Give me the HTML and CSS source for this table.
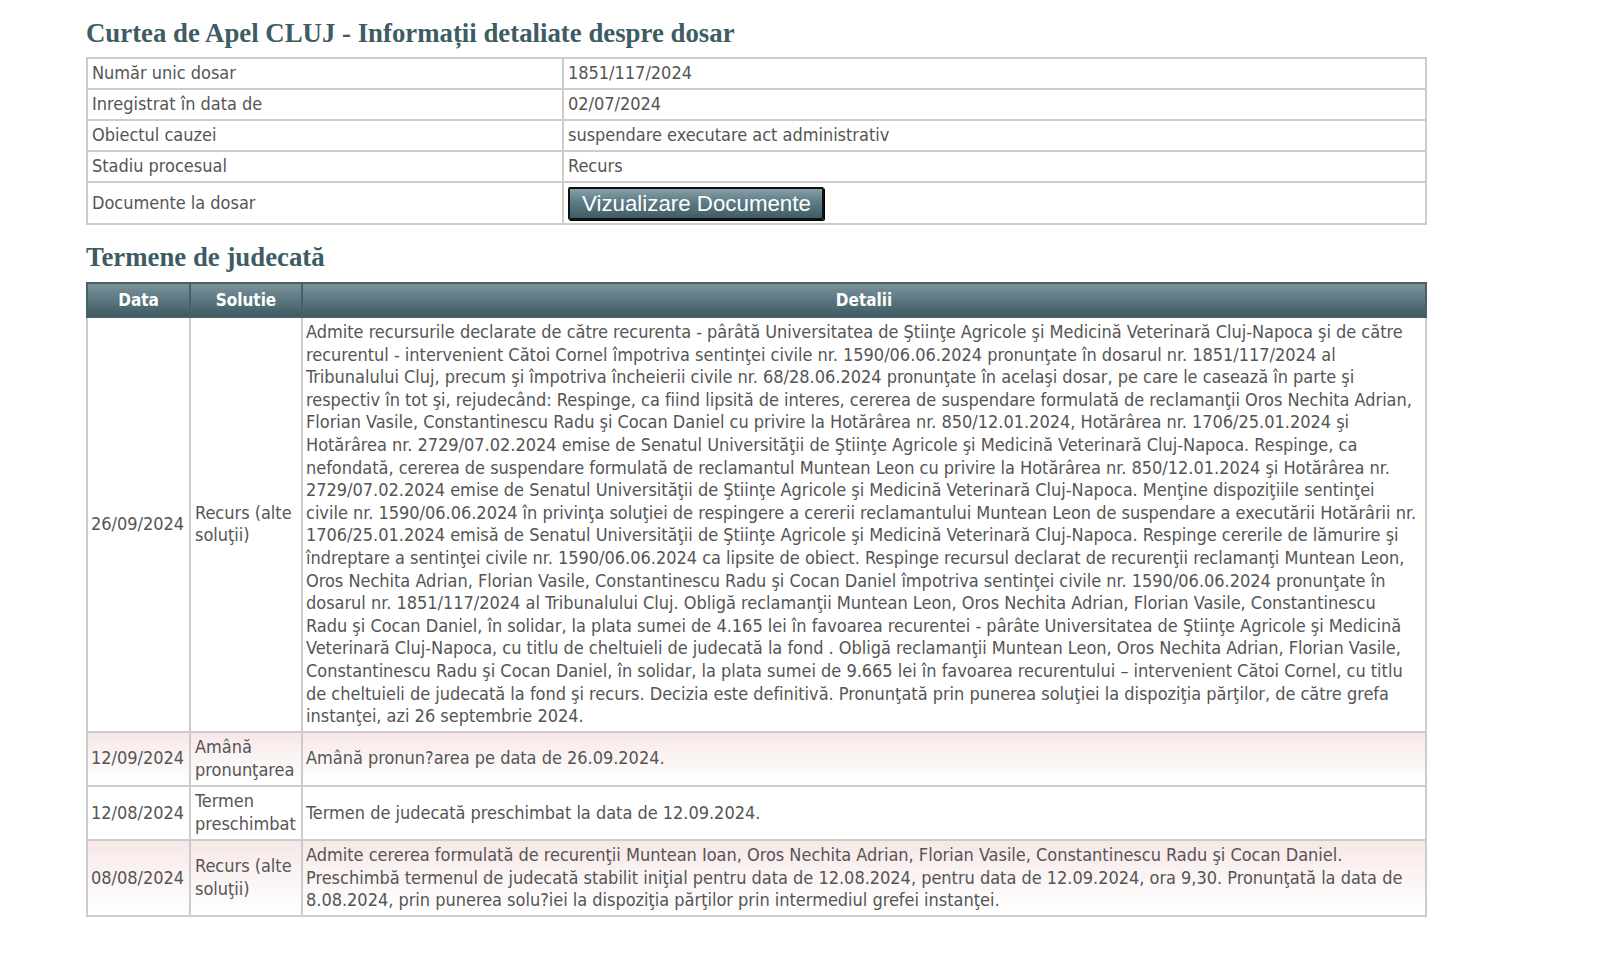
FILE: index.html
```html
<!DOCTYPE html>
<html lang="ro">
<head>
<meta charset="utf-8">
<title>Curtea de Apel CLUJ - Informații detaliate despre dosar</title>
<link rel="stylesheet" href="styles.css">
</head>
<body>
<div class="page">
  <h2 class="title">Curtea de Apel CLUJ - Informații detaliate despre dosar</h2>
  <table class="info">
    <colgroup><col class="c-label"><col></colgroup>
    <tr><td>Număr unic dosar</td><td>1851/117/2024</td></tr>
    <tr><td>Inregistrat în data de</td><td>02/07/2024</td></tr>
    <tr><td>Obiectul cauzei</td><td>suspendare executare act administrativ</td></tr>
    <tr><td>Stadiu procesual</td><td>Recurs</td></tr>
    <tr class="docs"><td>Documente la dosar</td><td><button class="btn" type="button">Vizualizare Documente</button></td></tr>
  </table>

  <h2 class="title title2">Termene de judecată</h2>
  <table class="terms">
    <colgroup><col class="c-date"><col class="c-sol"><col></colgroup>
    <thead>
      <tr><th>Data</th><th>Solutie</th><th>Detalii</th></tr>
    </thead>
    <tbody>
      <tr>
        <td class="date">26/09/2024</td>
        <td class="sol">Recurs (alte soluţii)</td>
        <td class="det">Admite recursurile declarate de către recurenta - pârâtă Universitatea de Ştiinţe Agricole şi Medicină Veterinară Cluj-Napoca şi de către recurentul - intervenient Cătoi Cornel împotriva sentinţei civile nr. 1590/06.06.2024 pronunţate în dosarul nr. 1851/117/2024 al Tribunalului Cluj, precum şi împotriva încheierii civile nr. 68/28.06.2024 pronunţate în acelaşi dosar, pe care le casează în parte şi respectiv în tot şi, rejudecând: Respinge, ca fiind lipsită de interes, cererea de suspendare formulată de reclamanţii Oros Nechita Adrian, Florian Vasile, Constantinescu Radu şi Cocan Daniel cu privire la Hotărârea nr. 850/12.01.2024, Hotărârea nr. 1706/25.01.2024 şi Hotărârea nr. 2729/07.02.2024 emise de Senatul Universităţii de Ştiinţe Agricole şi Medicină Veterinară Cluj-Napoca. Respinge, ca nefondată, cererea de suspendare formulată de reclamantul Muntean Leon cu privire la Hotărârea nr. 850/12.01.2024 şi Hotărârea nr. 2729/07.02.2024 emise de Senatul Universităţii de Ştiinţe Agricole şi Medicină Veterinară Cluj-Napoca. Menţine dispoziţiile sentinţei civile nr. 1590/06.06.2024 în privinţa soluţiei de respingere a cererii reclamantului Muntean Leon de suspendare a executării Hotărârii nr. 1706/25.01.2024 emisă de Senatul Universităţii de Ştiinţe Agricole şi Medicină Veterinară Cluj-Napoca. Respinge cererile de lămurire şi îndreptare a sentinţei civile nr. 1590/06.06.2024 ca lipsite de obiect. Respinge recursul declarat de recurenţii reclamanţi Muntean Leon, Oros Nechita Adrian, Florian Vasile, Constantinescu Radu şi Cocan Daniel împotriva sentinţei civile nr. 1590/06.06.2024 pronunţate în dosarul nr. 1851/117/2024 al Tribunalului Cluj. Obligă reclamanţii Muntean Leon, Oros Nechita Adrian, Florian Vasile, Constantinescu Radu şi Cocan Daniel, în solidar, la plata sumei de 4.165 lei în favoarea recurentei - pârâte Universitatea de Ştiinţe Agricole şi Medicină Veterinară Cluj-Napoca, cu titlu de cheltuieli de judecată la fond . Obligă reclamanţii Muntean Leon, Oros Nechita Adrian, Florian Vasile, Constantinescu Radu şi Cocan Daniel, în solidar, la plata sumei de 9.665 lei în favoarea recurentului – intervenient Cătoi Cornel, cu titlu de cheltuieli de judecată la fond şi recurs. Decizia este definitivă. Pronunţată prin punerea soluţiei la dispoziţia părţilor, de către grefa instanţei, azi 26 septembrie 2024.</td>
      </tr>
      <tr class="alt">
        <td class="date">12/09/2024</td>
        <td class="sol">Amână pronunţarea</td>
        <td class="det">Amână pronun?area pe data de 26.09.2024.</td>
      </tr>
      <tr>
        <td class="date">12/08/2024</td>
        <td class="sol">Termen preschimbat</td>
        <td class="det">Termen de judecată preschimbat la data de 12.09.2024.</td>
      </tr>
      <tr class="alt">
        <td class="date">08/08/2024</td>
        <td class="sol">Recurs (alte soluţii)</td>
        <td class="det">Admite cererea formulată de recurenţii Muntean Ioan, Oros Nechita Adrian, Florian Vasile, Constantinescu Radu şi Cocan Daniel. Preschimbă termenul de judecată stabilit iniţial pentru data de 12.08.2024, pentru data de 12.09.2024, ora 9,30. Pronunţată la data de 8.08.2024, prin punerea solu?iei la dispoziţia părţilor prin intermediul grefei instanţei.</td>
      </tr>
    </tbody>
  </table>
</div>
</body>
</html>
```

FILE: styles.css
```css
html, body {
  margin: 0;
  padding: 0;
  background: #ffffff;
}

.page {
  width: 1341px;
  margin-left: 86px;
  padding-top: 18px;
  font-family: "DejaVu Sans Condensed", "DejaVu Sans", sans-serif;
  font-size: 18px;
  letter-spacing: -0.02px;
  line-height: 22.6px;
  color: #555555;
}

.title {
  margin: 0 0 9px 0;
  font-family: "Liberation Serif", "Times New Roman", serif;
  font-weight: bold;
  font-size: 26.8px;
  letter-spacing: 0;
  line-height: 30px;
  color: #3d5c63;
}

.title2 {
  margin-top: 17px;
  margin-bottom: 10px;
}

table {
  width: 100%;
  border-collapse: collapse;
  border: 2px solid #cccccc;
}

td, th {
  border: 2px solid #cccccc;
  padding: 3px 3px 3px 4px;
  text-align: left;
}

.info td {
  height: 23px;
  vertical-align: middle;
}

.info .c-label {
  width: 476px;
}

.info .docs td {
  height: 36px;
  padding-top: 2px;
  padding-bottom: 2px;
}

.btn {
  font-family: "Liberation Sans", Arial, sans-serif;
  font-size: 22.3px;
  line-height: 25px;
  color: #ffffff;
  padding: 2px 11px 2px 12px;
  border: 2px solid #111111;
  border-radius: 2px;
  background: linear-gradient(to bottom, #86a0a8 0%, #5d7b84 45%, #3f5c65 100%);
  box-shadow: 1px 1px 0 #000000;
  cursor: pointer;
}

.terms .c-date { width: 103px; }
.terms .c-sol { width: 112px; }

.terms th {
  height: 28px;
  padding: 2px 3px;
  text-align: center;
  color: #ffffff;
  font-weight: bold;
  font-size: 17px;
  border-color: #4a6068;
  background: linear-gradient(to bottom, #7b949b 0%, #5e7a83 45%, #3f5a63 100%);
}

.terms td {
  vertical-align: middle;
}

.terms td.date {
  padding-left: 3px;
  padding-right: 2px;
  white-space: nowrap;
}

.terms td.sol {
  padding-top: 3.5px;
  padding-bottom: 3.5px;
}

.terms td.det {
  padding: 3px 6px 3px 3px;
}

.terms tr.alt td {
  background: linear-gradient(to bottom, #f8e7e7 0%, #fbf3f3 45%, #ffffff 100%);
}
```
